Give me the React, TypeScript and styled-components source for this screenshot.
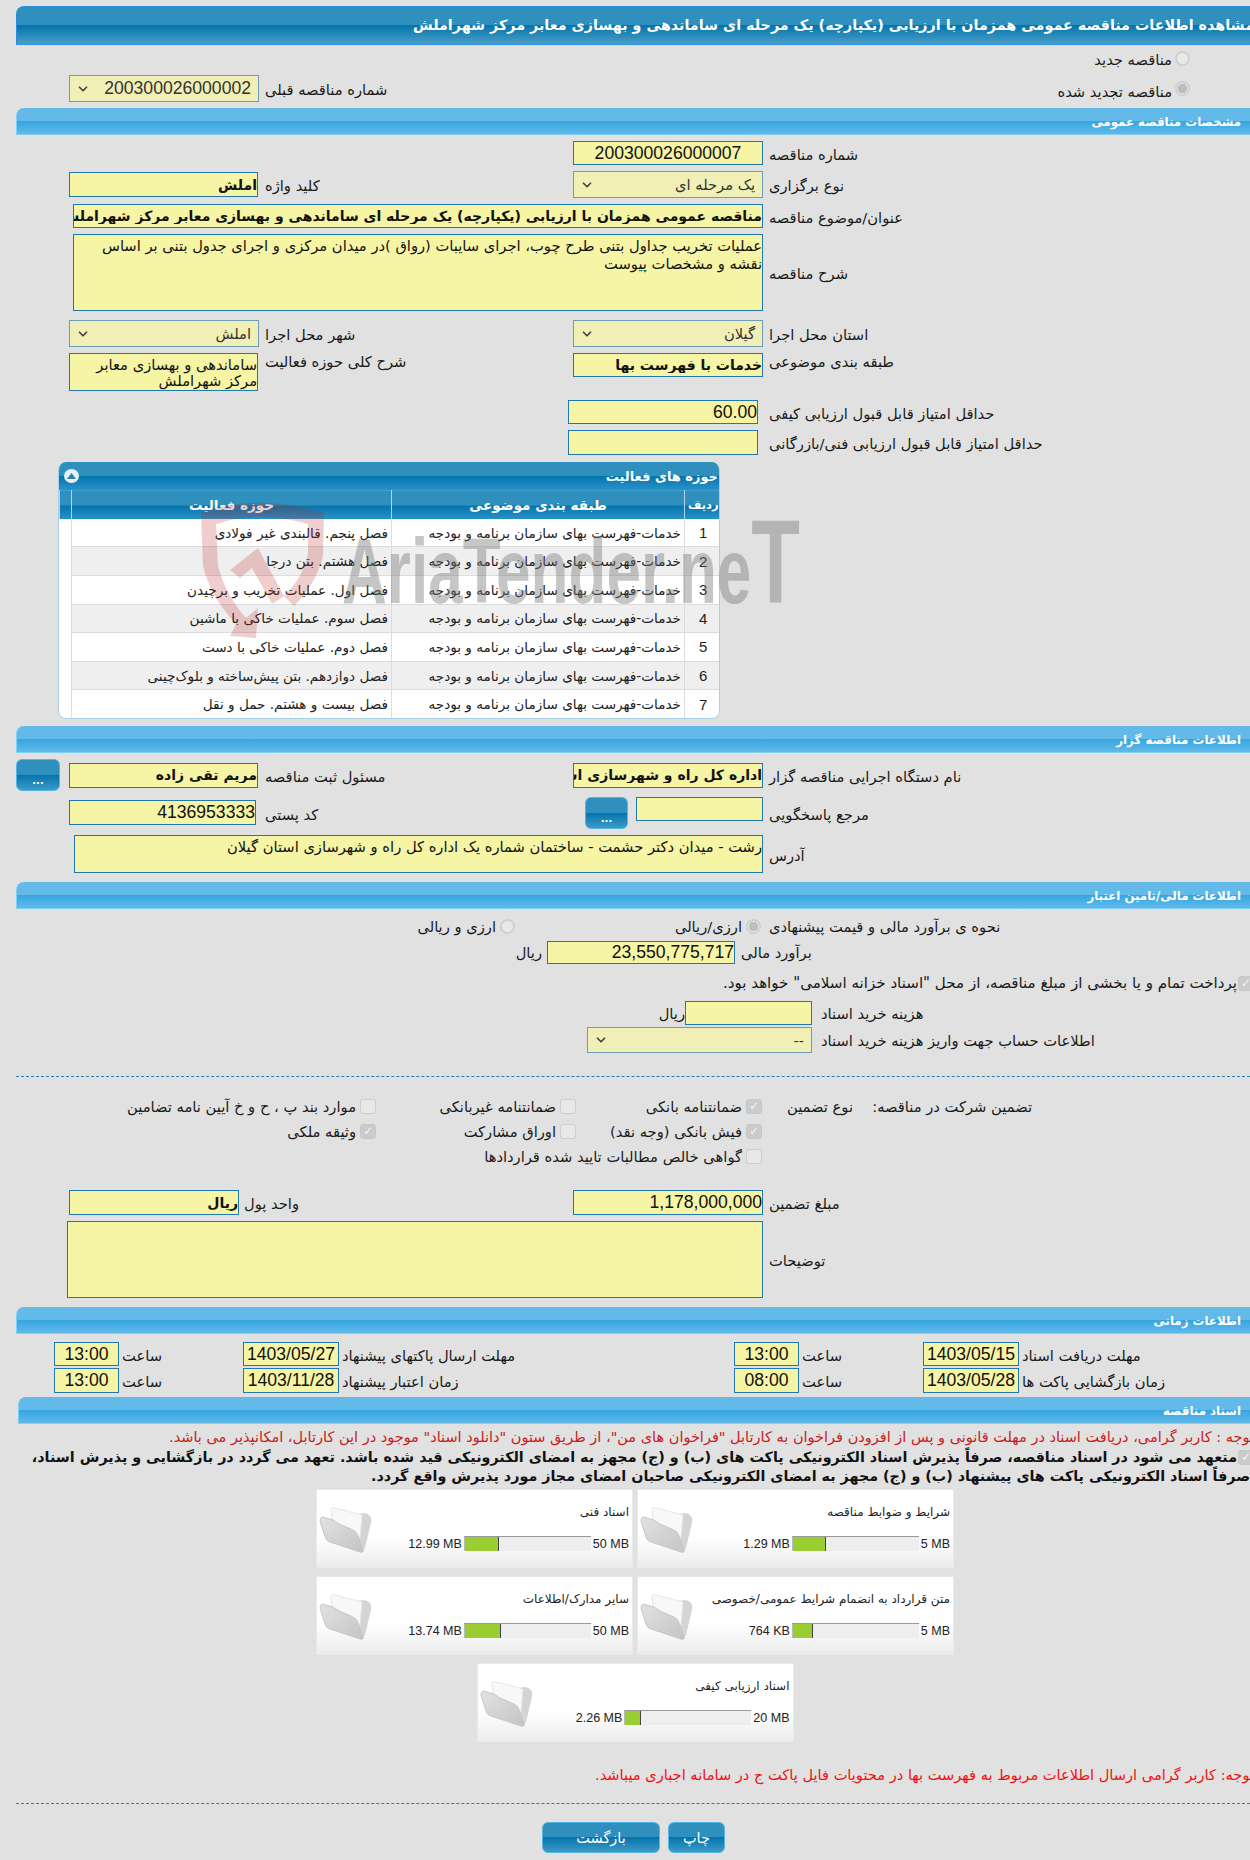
import styled, { createGlobalStyle } from "styled-components";
import { ChevronDown } from "lucide-react";

const fa = `"DejaVu Sans", "Noto Sans", sans-serif`;
const num = `"Liberation Sans", "DejaVu Sans", sans-serif`;

const GlobalStyle = createGlobalStyle`
  html, body {
    margin: 0;
    padding: 0;
    background: #e1e1e1;
    font-family: ${fa};
  }
`;

const Page = styled.div`
  position: relative;
  width: 1250px;
  height: 1860px;
  overflow: hidden;
  background: #e1e1e1;
  color: #1a1a1a;
  font-size: 14.7px;
`;

const TitleBar = styled.div`
  margin: 6px 0 0 16px;
  height: 39px;
  box-sizing: border-box;
  border: 1px solid #2a8fd8;
  border-right: 0;
  border-top-left-radius: 8px;
  background: linear-gradient(#2f8fbd 0%, #2f8fbd 50%, #0474ad 50%, #4b9ec6 100%);
  color: #fff;
  font-size: 14.3px;
  font-weight: bold;
  direction: rtl;
  line-height: 37px;
  white-space: nowrap;
  overflow: hidden;
  text-indent: -4px;
`;

const SectionBar = styled.div<{ $mt?: number; $ml?: number }>`
  margin: ${(p) => p.$mt ?? 7}px 0 0 ${(p) => p.$ml ?? 16}px;
  height: 27px;
  box-sizing: border-box;
  border-bottom: 1px solid #7fd0f5;
  border-left: 1px solid #7fd0f5;
  border-top-left-radius: 8px;
  background: linear-gradient(#63b9e8 0%, #63b9e8 50%, #36a5e0 50%, #60baea 100%);
  color: #fff;
  font-size: 11.8px;
  font-weight: bold;
  direction: rtl;
  line-height: 28px;
  padding-right: 9px;
`;

const Row = styled.div<{ $mt: number; $h: number; $top?: boolean }>`
  display: grid;
  grid-template-columns: 69px 190px 314px 190px 1fr;
  margin-top: ${(p) => p.$mt}px;
  height: ${(p) => p.$h}px;
  align-items: ${(p) => (p.$top ? "start" : "center")};
  > * {
    grid-row: 1;
  }
`;

const Label = styled.div<{ $col: number; $mt?: number; $ml?: number }>`
  grid-column: ${(p) => p.$col};
  direction: rtl;
  text-align: left;
  white-space: nowrap;
  margin-left: ${(p) => p.$ml ?? 6}px;
  margin-top: ${(p) => p.$mt ?? 2}px;
`;

const fieldBase = `
  box-sizing: border-box;
  border: 1px solid #1f78b0;
  background: #f6f4a5;
  color: #111;
  direction: rtl;
  outline: none;
  margin: 0;
`;

const Input = styled.input<{ $col?: string; $w?: number; $h?: number; $mt?: number; $bold?: boolean; $num?: boolean; $center?: boolean; $end?: boolean; $mx?: number }>`
  ${fieldBase}
  grid-column: ${(p) => p.$col ?? "auto"};
  justify-self: ${(p) => (p.$end ? "end" : "start")};
  width: ${(p) => p.$w ?? 190}px;
  height: ${(p) => p.$h ?? 24}px;
  margin-top: ${(p) => p.$mt ?? 0}px;
  margin-right: ${(p) => p.$mx ?? 0}px;
  padding: 0;
  text-align: ${(p) => (p.$center ? "center" : "right")};
  font-family: ${(p) => (p.$num ? num : fa)};
  font-size: ${(p) => (p.$num ? 17.6 : p.$bold ? 14 : 14.6)}px;
  font-weight: ${(p) => (p.$bold ? "bold" : "normal")};
`;

const Area = styled.textarea<{ $col: string; $w: number; $h: number; $self?: string; $tight?: boolean }>`
  ${fieldBase}
  grid-column: ${(p) => p.$col};
  justify-self: ${(p) => p.$self ?? "end"};
  width: ${(p) => p.$w}px;
  height: ${(p) => p.$h}px;
  padding: ${(p) => (p.$tight ? 3 : 2)}px 0 0;
  resize: none;
  overflow: hidden;
  font-family: ${fa};
  font-size: 14.7px;
  line-height: ${(p) => (p.$tight ? 16 : 18)}px;
`;

const Select = styled.div<{ $col?: string; $w?: number; $h?: number; $num?: boolean }>`
  box-sizing: border-box;
  grid-column: ${(p) => p.$col ?? "auto"};
  width: ${(p) => p.$w ?? 190}px;
  height: ${(p) => p.$h ?? 27}px;
  border: 1px solid #6f9cb9;
  background: #f0efb5;
  display: flex;
  align-items: center;
  justify-content: space-between;
  padding: 0 7px 0 6px;
  font-family: ${(p) => (p.$num ? num : fa)};
  font-size: ${(p) => (p.$num ? 17.6 : 14.7)}px;
  color: #333;
  direction: ltr;
  svg {
    flex: none;
  }
  span {
    direction: rtl;
  }
`;

const RadioLine = styled.label<{ $col?: number; $low?: boolean }>`
  grid-column: ${(p) => p.$col ?? "auto"};
  display: flex;
  direction: rtl;
  align-items: flex-start;
  gap: 3px;
  padding-right: 60px;
  height: 15px;
  line-height: ${(p) => (p.$low ? 21 : 18)}px;
  white-space: nowrap;
`;

const Radio = styled.span<{ $on?: boolean }>`
  display: inline-block;
  box-sizing: border-box;
  flex: none;
  width: 15px;
  height: 15px;
  border-radius: 50%;
  border: 2px solid #cfcfcf;
  background: ${(p) => (p.$on ? "radial-gradient(circle, #bdbdbd 0 4.5px, #e9e9e9 5px)" : "#e9e9e9")};
`;

const Check = styled.span<{ $on?: boolean }>`
  display: inline-flex;
  align-items: center;
  justify-content: center;
  box-sizing: border-box;
  flex: none;
  width: 16px;
  height: 15px;
  border-radius: 3px;
  border: 1px solid ${(p) => (p.$on ? "#c8c8c8" : "#cdcdcd")};
  background: ${(p) => (p.$on ? "#cbcbcb" : "#e8e8e8")};
  color: #f4f4f4;
  font-size: 12px;
  font-family: ${fa};
  font-weight: normal;
  line-height: 1;
`;

const BlueButton = styled.button<{ $w: number; $h: number; $ml?: number; $col?: number; $size?: number }>`
  grid-column: ${(p) => p.$col ?? "auto"};
  justify-self: start;
  width: ${(p) => p.$w}px;
  height: ${(p) => p.$h}px;
  margin: 0 0 0 ${(p) => p.$ml ?? 0}px;
  padding: ${(p) => (p.$size ? 0 : "10px")} 0 0;
  border: 1px solid #56b4e4;
  border-radius: 6px;
  background: linear-gradient(#2f8fbd 0%, #2f8fbd 50%, #0474ad 50%, #3d9ac6 100%);
  color: #fff;
  font-family: ${fa};
  font-size: ${(p) => p.$size ?? 10}px;
  font-weight: ${(p) => (p.$size ? "normal" : "bold")};
  direction: rtl;
`;

const FlexRow = styled.div<{ $mt: number; $h: number; $pl: number }>`
  display: flex;
  align-items: center;
  margin-top: ${(p) => p.$mt}px;
  height: ${(p) => p.$h}px;
  padding-left: ${(p) => p.$pl}px;
`;

const Cell = styled.div<{ $w: number; $mr?: number }>`
  flex: none;
  width: ${(p) => p.$w}px;
  margin-right: ${(p) => p.$mr ?? 0}px;
  direction: rtl;
  text-align: right;
  white-space: nowrap;
`;

const FreeLabel = styled.div<{ $ml?: number }>`
  direction: rtl;
  white-space: nowrap;
  margin-left: ${(p) => p.$ml ?? 9}px;
`;

const NoteCheck = styled.div<{ $mt: number; $size?: number }>`
  display: flex;
  direction: rtl;
  align-items: center;
  gap: 1px;
  margin-top: ${(p) => p.$mt}px;
  height: 20px;
  margin-right: -4px;
  font-size: ${(p) => p.$size ?? 14.7}px;
  white-space: nowrap;
`;

const Dashed = styled.div<{ $mt: number }>`
  margin: ${(p) => p.$mt}px 0 0 16px;
  border-top: 1px dashed #2a7eb0;
`;

const GuaranteeGrid = styled.div`
  display: grid;
  direction: rtl;
  grid-template-columns: 218px 179px 91px 186px 200px 1fr;
  grid-auto-rows: 18px;
  row-gap: 7px;
  margin-top: 20px;
  align-items: center;
  white-space: nowrap;
`;

const GuaranteeItem = styled.div<{ $col: number }>`
  grid-column: ${(p) => p.$col};
  display: flex;
  align-items: center;
  gap: 4px;
`;

const TimeRow = styled.div<{ $mt: number; $h: number }>`
  display: grid;
  grid-template-columns: 54px 65px 124px 96px 395px 65px 124px 96px 1fr;
  margin-top: ${(p) => p.$mt}px;
  height: ${(p) => p.$h}px;
  align-items: center;
`;

const TimeLabel = styled.div`
  direction: rtl;
  text-align: left;
  padding: 2px 0 0 3px;
  white-space: nowrap;
`;

const RedNote = styled.div<{ $mt: number; $color: string; $size: number }>`
  margin: ${(p) => p.$mt}px -4px 0 0;
  height: 18px;
  line-height: 18px;
  direction: rtl;
  white-space: nowrap;
  color: ${(p) => p.$color};
  font-size: ${(p) => p.$size}px;
`;

const BoldNote = styled.div`
  direction: rtl;
  white-space: nowrap;
  font-weight: bold;
  font-size: 14.3px;
  color: #111;
  line-height: 18px;
`;

const Panel = styled.div`
  box-sizing: border-box;
  margin: 7px 0 0 58px;
  width: 662px;
  height: 257px;
  background: #fff;
  border: 1px solid #a9cfe8;
  border-top: 0;
  border-radius: 8px;
  overflow: hidden;
`;

const PanelBar = styled.div`
  height: 28px;
  display: flex;
  direction: rtl;
  align-items: center;
  justify-content: space-between;
  padding: 0 1px 0 5px;
  background: linear-gradient(#2f8fbd 0%, #2f8fbd 50%, #0474ad 50%, #2a93c8 100%);
  color: #fff;
  font-size: 13px;
  font-weight: bold;
`;

const CollapseDot = styled.span`
  display: flex;
  align-items: center;
  justify-content: center;
  width: 15px;
  height: 14px;
  border-radius: 50%;
  background: #e8eff5;
  svg {
    display: block;
  }
`;

const Table = styled.table`
  width: 100%;
  height: 229px;
  border-collapse: collapse;
  table-layout: fixed;
  direction: rtl;
  font-size: 13.6px;
  th {
    height: 28px;
    padding: 0;
    color: #fff;
    font-size: 13.5px;
    font-weight: bold;
    white-space: nowrap;
    border-left: 1px solid #a9d6f0;
    border-top: 1px solid #3f9ed2;
    background: linear-gradient(#2f8fbd 0%, #2f8fbd 50%, #0474ad 50%, #2a93c8 100%);
  }
  td {
    padding: 0 3px;
    border-left: 1px solid #dcdcdc;
    border-bottom: 1px solid #dcdcdc;
    white-space: nowrap;
    color: #222;
  }
  tr:nth-child(even) td {
    background: #efefef;
  }
  td:last-child {
    background: #fff !important;
    border: 0;
  }
`;

const RowHead = styled.th`
  && {
    font-size: 11.5px;
  }
`;

const NumCell = styled.td`
  text-align: center;
  font-family: ${num};
  font-size: 15px;
`;

const Watermark = styled.svg`
  position: absolute;
  left: 196px;
  top: 496px;
  pointer-events: none;
`;

const Cards = styled.div`
  display: flex;
  flex-wrap: wrap;
  justify-content: center;
  direction: rtl;
  gap: 8px 4px;
  width: 640px;
  margin: 4px 0 0 315px;
`;

const Card = styled.div`
  box-sizing: border-box;
  position: relative;
  width: 317px;
  height: 79px;
  padding: 13px 3px 0 0;
  background: linear-gradient(#fff 0%, #fff 60%, #ececec 100%);
  border: 1px solid #e9e9e9;
  color: #222;
`;

const CardTitle = styled.div`
  height: 18px;
  line-height: 18px;
  font-size: 12px;
  white-space: nowrap;
`;

const CardBar = styled.div`
  display: flex;
  align-items: center;
  margin-top: 15px;
  font-family: ${num};
  font-size: 12.5px;
  height: 15px;
  direction: ltr;
  justify-content: flex-end;
  gap: 2px;
`;

const Track = styled.div`
  position: relative;
  box-sizing: border-box;
  width: 127px;
  height: 15px;
  background: #eee;
  border-top: 1px solid #999;
  border-left: 1px solid #bbb;
`;

const Fill = styled.div`
  box-sizing: border-box;
  height: 100%;
  background: #9acd32;
  border-right: 1px solid #444;
`;

const FolderIcon = styled.svg`
  position: absolute;
  left: 2px;
  top: 16px;
`;

const Footer = styled.div`
  display: flex;
  gap: 8px;
  margin: 18px 0 0 542px;
`;

const fields = [
  "فصل پنجم. قالبندی غیر فولادی",
  "فصل هشتم. بتن درجا",
  "فصل اول. عملیات تخریب و برچیدن",
  "فصل سوم. عملیات خاکی با ماشین",
  "فصل دوم. عملیات خاکی با دست",
  "فصل دوازدهم. بتن پیش‌ساخته و بلوک‌چینی",
  "فصل بیست و هشتم. حمل و نقل",
];

const docs = [
  { title: "شرایط و ضوابط مناقصه", used: "1.29 MB", max: "5 MB", fill: 33 },
  { title: "اسناد فنی", used: "12.99 MB", max: "50 MB", fill: 34 },
  { title: "متن قرارداد به انضمام شرایط عمومی/خصوصی", used: "764 KB", max: "5 MB", fill: 20 },
  { title: "سایر مدارک/اطلاعات", used: "13.74 MB", max: "50 MB", fill: 36 },
  { title: "اسناد ارزیابی کیفی", used: "2.26 MB", max: "20 MB", fill: 16 },
];

const Folder = () => (
  <FolderIcon width="54" height="48" viewBox="0 0 54 48">
    <defs>
      <linearGradient id="flap" x1="0" y1="0" x2="1" y2="1">
        <stop offset="0" stopColor="#e2e2e2" />
        <stop offset="1" stopColor="#c4c4c4" />
      </linearGradient>
    </defs>
    <path d="M40 8 Q47 5 51 10 Q53 13 52 17 L46 42 Q45 45 43 43 L30 30 Z" fill="#d4d4d4" />
    <path d="M12 3 Q13 1 16 2 L43 9 L41 32 L14 24 Z" fill="#f8f8f8" stroke="#e6e6e6" />
    <path d="M3 11 Q1 12 1 15 L6 31 Q7 35 11 36 L41 46 Q45 47 44 44 L39 30 Q38 26 34 24 L20 18 L14 14 Z" fill="url(#flap)" stroke="#c6c6c6" strokeLinejoin="round" />
  </FolderIcon>
);

const Arrow = () => <ChevronDown size={14} strokeWidth={3} color="#444" />;

export default function App() {
  return (
    <Page>
      <GlobalStyle />
      <TitleBar>مشاهده اطلاعات مناقصه عمومی همزمان با ارزیابی (یکپارچه) یک مرحله ای ساماندهی و بهسازی معابر مرکز شهراملش</TitleBar>

      <Row $mt={6} $h={15}>
        <RadioLine $col={5}>
          <Radio />
          مناقصه جدید
        </RadioLine>
      </Row>
      <Row $mt={9} $h={27}>
        <Select $col="2" $num>
          <Arrow />
          <span>200300026000002</span>
        </Select>
        <Label $col={3}>شماره مناقصه قبلی</Label>
        <RadioLine $col={5} $low>
          <Radio $on />
          مناقصه تجدید شده
        </RadioLine>
      </Row>

      <SectionBar $mt={6}>مشخصات مناقصه عمومی</SectionBar>
      <Row $mt={6} $h={24}>
        <Input $col="4" $num $center readOnly value="200300026000007" />
        <Label $col={5}>شماره مناقصه</Label>
      </Row>
      <Row $mt={6} $h={27}>
        <Input $col="2" $w={189} $h={25} $bold readOnly value="املش" />
        <Label $col={3}>کلید واژه</Label>
        <Select $col="4">
          <Arrow />
          <span>یک مرحله ای</span>
        </Select>
        <Label $col={5}>نوع برگزاری</Label>
      </Row>
      <Row $mt={6} $h={24}>
        <Input $col="1 / 5" $w={690} $bold $end readOnly value="مناقصه عمومی همزمان با ارزیابی (یکپارچه) یک مرحله ای ساماندهی و بهسازی معابر مرکز شهراملش" />
        <Label $col={5}>عنوان/موضوع مناقصه</Label>
      </Row>
      <Row $mt={6} $h={77}>
        <Area $col="1 / 5" $w={690} $h={77} readOnly value="عملیات تخریب جداول بتنی طرح چوب، اجرای سایبات (رواق )در میدان مرکزی و اجرای جدول بتنی بر اساس نقشه و مشخصات پیوست" />
        <Label $col={5}>شرح مناقصه</Label>
      </Row>
      <Row $mt={9} $h={27}>
        <Select $col="2">
          <Arrow />
          <span>املش</span>
        </Select>
        <Label $col={3}>شهر محل اجرا</Label>
        <Select $col="4">
          <Arrow />
          <span>گیلان</span>
        </Select>
        <Label $col={5}>استان محل اجرا</Label>
      </Row>
      <Row $mt={6} $h={38} $top>
        <Area $col="2" $w={189} $h={38} $self="start" $tight readOnly value="ساماندهی و بهسازی معابر مرکز شهراملش" />
        <Label $col={3} $mt={0}>شرح کلی حوزه فعالیت</Label>
        <Input $col="4" $bold readOnly value="خدمات با فهرست بها" />
        <Label $col={5} $mt={0}>طبقه بندی موضوعی</Label>
      </Row>
      <Row $mt={9} $h={24}>
        <Input $col="3 / 5" $num $end $mx={5} readOnly value="60.00" />
        <Label $col={5}>حداقل امتیاز قابل قبول ارزیابی کیفی</Label>
      </Row>
      <Row $mt={6} $h={25}>
        <Input $col="3 / 5" $h={25} $end $mx={5} readOnly />
        <Label $col={5}>حداقل امتیاز قابل قبول ارزیابی فنی/بازرگانی</Label>
      </Row>

      <Panel>
        <PanelBar>
          حوزه های فعالیت
          <CollapseDot>
            <svg width="9" height="6" viewBox="0 0 9 6">
              <path d="M4.5 0 L9 6 L0 6 Z" fill="#2f7fae" />
            </svg>
          </CollapseDot>
        </PanelBar>
        <Table>
          <colgroup>
            <col width="37" />
            <col width="293" />
            <col width="320" />
            <col width="12" />
          </colgroup>
          <thead>
            <tr>
              <RowHead>ردیف</RowHead>
              <th>طبقه بندی موضوعی</th>
              <th>حوزه فعالیت</th>
              <th />
            </tr>
          </thead>
          <tbody>
            {fields.map((f, i) => (
              <tr key={f}>
                <NumCell>{i + 1}</NumCell>
                <td>خدمات-فهرست بهای سازمان برنامه و بودجه</td>
                <td>{f}</td>
                <td />
              </tr>
            ))}
          </tbody>
        </Table>
      </Panel>

      <SectionBar>اطلاعات مناقصه گزار</SectionBar>
      <Row $mt={6} $h={32}>
        <BlueButton $col={1} $w={44} $h={32} $ml={16}>...</BlueButton>
        <Input $col="2" $w={189} $h={25} $bold readOnly value="مریم تقی زاده" />
        <Label $col={3}>مسئول ثبت مناقصه</Label>
        <Input $col="4" $h={25} $bold readOnly value="اداره کل راه و شهرسازی استان گیلان" />
        <Label $col={5}>نام دستگاه اجرایی مناقصه گزار</Label>
      </Row>
      <Row $mt={6} $h={32} $top>
        <Input $col="2" $w={187} $h={25} $mt={3} $num readOnly value="4136953333" />
        <Label $col={3} $mt={9}>کد پستی</Label>
        <BlueButton $col={4} $w={43} $h={32} $ml={12}>...</BlueButton>
        <Input $col="4" $w={127} $end readOnly />
        <Label $col={5} $mt={9}>مرجع پاسخگویی</Label>
      </Row>
      <Row $mt={6} $h={38}>
        <Area $col="1 / 5" $w={689} $h={38} readOnly value="رشت - میدان دکتر حشمت - ساختمان شماره یک اداره کل راه و شهرسازی استان گیلان" />
        <Label $col={5}>آدرس</Label>
      </Row>

      <SectionBar $mt={9}>اطلاعات مالی/تامین اعتبار</SectionBar>
      <FlexRow $mt={8} $h={18} $pl={420}>
        <Cell $w={76} $mr={4}>ارزی و ریالی</Cell>
        <Radio />
        <Cell $w={227} $mr={4}>ارزی/ریالی</Cell>
        <Radio $on />
        <FreeLabel $ml={8}>نحوه ی برآورد مالی و قیمت پیشنهادی</FreeLabel>
      </FlexRow>
      <FlexRow $mt={6} $h={23} $pl={518}>
        <Cell $w={24} $mr={5}>ریال</Cell>
        <Input $w={188} $h={23} $num readOnly value="23,550,775,717" />
        <FreeLabel $ml={6}>برآورد مالی</FreeLabel>
      </FlexRow>
      <NoteCheck $mt={9} $size={15.1}>
        <Check $on>✓</Check>
        پرداخت تمام و یا بخشی از مبلغ مناقصه، از محل "اسناد خزانه اسلامی" خواهد بود.
      </NoteCheck>
      <FlexRow $mt={8} $h={24} $pl={662}>
        <Cell $w={23}>ریال</Cell>
        <Input $w={127} readOnly />
        <FreeLabel>هزینه خرید اسناد</FreeLabel>
      </FlexRow>
      <FlexRow $mt={2} $h={26} $pl={587}>
        <Select $w={225} $h={26}>
          <Arrow />
          <span>--</span>
        </Select>
        <FreeLabel>اطلاعات حساب جهت واریز هزینه خرید اسناد</FreeLabel>
      </FlexRow>

      <Dashed $mt={23} />

      <GuaranteeGrid>
        <GuaranteeItem $col={2}>تضمین شرکت در مناقصه:</GuaranteeItem>
        <GuaranteeItem $col={3}>نوع تضمین</GuaranteeItem>
        <GuaranteeItem $col={4}><Check $on>✓</Check>ضمانتنامه بانکی</GuaranteeItem>
        <GuaranteeItem $col={5}><Check />ضمانتنامه غیربانکی</GuaranteeItem>
        <GuaranteeItem $col={6}><Check />موارد بند پ ، ح و خ آیین نامه تضامین</GuaranteeItem>
        <GuaranteeItem $col={4}><Check $on>✓</Check>فیش بانکی (وجه نقد)</GuaranteeItem>
        <GuaranteeItem $col={5}><Check />اوراق مشارکت</GuaranteeItem>
        <GuaranteeItem $col={6}><Check $on>✓</Check>وثیقه ملکی</GuaranteeItem>
        <GuaranteeItem $col={4}><Check />گواهی خالص مطالبات تایید شده قراردادها</GuaranteeItem>
      </GuaranteeGrid>

      <Row $mt={25} $h={25}>
        <Input $col="2" $w={170} $h={25} $bold readOnly value="ریال" />
        <Label $col={3} $ml={-15}>واحد پول</Label>
        <Input $col="4" $h={25} $num readOnly value="1,178,000,000" />
        <Label $col={5}>مبلغ تضمین</Label>
      </Row>
      <Row $mt={6} $h={77}>
        <Area $col="1 / 5" $w={696} $h={77} readOnly />
        <Label $col={5}>توضیحات</Label>
      </Row>

      <SectionBar $mt={9}>اطلاعات زمانی</SectionBar>
      <TimeRow $mt={8} $h={24}>
        <span />
        <Input $w={65} $num $center readOnly value="13:00" />
        <TimeLabel>ساعت</TimeLabel>
        <Input $w={96} $num $center readOnly value="1403/05/27" />
        <TimeLabel>مهلت ارسال پاکتهای پیشنهاد</TimeLabel>
        <Input $w={65} $num $center readOnly value="13:00" />
        <TimeLabel>ساعت</TimeLabel>
        <Input $w={96} $num $center readOnly value="1403/05/15" />
        <TimeLabel>مهلت دریافت اسناد</TimeLabel>
      </TimeRow>
      <TimeRow $mt={2} $h={25}>
        <span />
        <Input $w={65} $h={25} $num $center readOnly value="13:00" />
        <TimeLabel>ساعت</TimeLabel>
        <Input $w={96} $h={25} $num $center readOnly value="1403/11/28" />
        <TimeLabel>زمان اعتبار پیشنهاد</TimeLabel>
        <Input $w={65} $h={25} $num $center readOnly value="08:00" />
        <TimeLabel>ساعت</TimeLabel>
        <Input $w={96} $h={25} $num $center readOnly value="1403/05/28" />
        <TimeLabel>زمان بازگشایی پاکت ها</TimeLabel>
      </TimeRow>

      <SectionBar $mt={4} $ml={18}>اسناد مناقصه</SectionBar>
      <RedNote $mt={4} $color="#c8201c" $size={14.5}>توجه : کاربر گرامی، دریافت اسناد در مهلت قانونی و پس از افزودن فراخوان به کارتابل "فراخوان های من"، از طریق ستون "دانلود اسناد" موجود در این کارتابل، امکانپذیر می باشد.</RedNote>
      <NoteCheck $mt={1}>
        <Check $on>✓</Check>
        <BoldNote>متعهد می شود در اسناد مناقصه، صرفاً پذیرش اسناد الکترونیکی پاکت های (ب) و (ج) مجهز به امضای الکترونیکی قید شده باشد. تعهد می گردد در بازگشایی و پذیرش اسناد،</BoldNote>
      </NoteCheck>
      <BoldNote>صرفاً اسناد الکترونیکی پاکت های پیشنهاد (ب) و (ج) مجهز به امضای الکترونیکی صاحبان امضای مجاز مورد پذیرش واقع گردد.</BoldNote>

      <Cards>
        {docs.map((d) => (
          <Card key={d.title}>
            <CardTitle>{d.title}</CardTitle>
            <CardBar>
              {d.used}
              <Track>
                <Fill style={{ width: d.fill }} />
              </Track>
              {d.max}
            </CardBar>
            <Folder />
          </Card>
        ))}
      </Cards>

      <RedNote $mt={24} $color="#f01010" $size={14.6}>توجه: کاربر گرامی ارسال اطلاعات مربوط به فهرست بها در محتویات فایل پاکت ج در سامانه اجباری میباشد.</RedNote>
      <Dashed $mt={19} />
      <Footer>
        <BlueButton $w={118} $h={31} $size={14.5}>بازگشت</BlueButton>
        <BlueButton $w={57} $h={31} $size={14.5}>چاپ</BlueButton>
      </Footer>

      <Watermark width="610" height="150" viewBox="0 0 610 150">
        <path d="M5 16 Q63 -3 128 17 L127 60 Q120 88 98 110 L88 100 Q108 80 112 58 L112 28 Q63 14 20 28 L22 70 Q30 100 50 122 L62 112 L60 142 L34 140 L40 128 Q14 100 7 70 Z" fill="#c02020" fillOpacity="0.22" />
        <path d="M34 74 L62 52 L88 100 L76 108 L56 72 L44 82 Z" fill="#c02020" fillOpacity="0.22" />
        <text x="146" y="107" fontFamily='"Liberation Sans", sans-serif' fontSize="92" fontWeight="bold" fill="#777" fillOpacity="0.42" textLength="458" lengthAdjust="spacingAndGlyphs">
          AriaTender.ne<tspan fontSize="118">T</tspan>
        </text>
      </Watermark>
    </Page>
  );
}
